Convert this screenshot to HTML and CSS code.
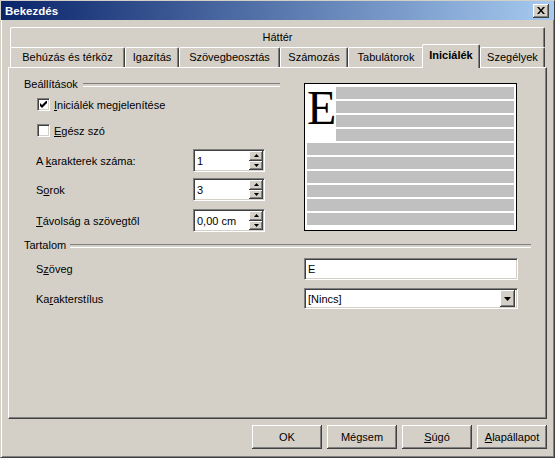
FILE: index.html
```html
<!DOCTYPE html>
<html lang="hu">
<head>
<meta charset="utf-8">
<title>Bekezdés</title>
<link rel="stylesheet" href="styles.css">
</head>
<body>
<div class="window">
  <div class="caption">
    <span class="caption-title">Bekezdés</span>
    <span class="close-btn"><svg width="8" height="7" viewBox="0 0 8 7"><path d="M0 0h2l2 2.4L6 0h2L5 3.5 8 7H6L4 4.6 2 7H0l3-3.5z" fill="#000"/></svg></span>
  </div>
  <div class="content">
    <div class="tabs">
      <div class="tab-row">
        <div class="tab tab-wide">Háttér</div>
      </div>
      <div class="tab-row tab-row-front">
        <div class="tab t1">Behúzás és térköz</div>
        <div class="tab t2">Igazítás</div>
        <div class="tab t3">Szövegbeosztás</div>
        <div class="tab t4">Számozás</div>
        <div class="tab t5">Tabulátorok</div>
        <div class="tab t6 selected">Iniciálék</div>
        <div class="tab t7">Szegélyek</div>
      </div>
    </div>
    <div class="panel">
      <div class="top">
        <div class="settings">
          <div class="group-title">Beállítások</div>
          <div class="check-row">
            <span class="checkbox"><svg width="7" height="7" viewBox="0 0 7 7"><path d="M0 2l2 2 5-5v3L2 7 0 5z" fill="#000"/></svg></span>
            <span class="check-label"><u>I</u>niciálék megjelenítése</span>
          </div>
          <div class="check-row second">
            <span class="checkbox"></span>
            <span class="check-label"><u>E</u>gész szó</span>
          </div>
          <div class="spin-row r1">
            <span class="row-label">A <u>k</u>arakterek száma:</span>
            <div class="spin">
              <span class="spin-value">1</span>
              <span class="spin-btns">
                <span class="spin-btn"><svg width="5" height="3" viewBox="0 0 5 3"><path d="M0 3h5L2.5 0z" fill="#000"/></svg></span>
                <span class="spin-btn"><svg width="5" height="3" viewBox="0 0 5 3"><path d="M0 0h5L2.5 3z" fill="#000"/></svg></span>
              </span>
            </div>
          </div>
          <div class="spin-row r2">
            <span class="row-label">S<u>o</u>rok</span>
            <div class="spin">
              <span class="spin-value">3</span>
              <span class="spin-btns">
                <span class="spin-btn"><svg width="5" height="3" viewBox="0 0 5 3"><path d="M0 3h5L2.5 0z" fill="#000"/></svg></span>
                <span class="spin-btn"><svg width="5" height="3" viewBox="0 0 5 3"><path d="M0 0h5L2.5 3z" fill="#000"/></svg></span>
              </span>
            </div>
          </div>
          <div class="spin-row r3">
            <span class="row-label"><u>T</u>ávolság a szövegtől</span>
            <div class="spin">
              <span class="spin-value">0,00 cm</span>
              <span class="spin-btns">
                <span class="spin-btn"><svg width="5" height="3" viewBox="0 0 5 3"><path d="M0 3h5L2.5 0z" fill="#000"/></svg></span>
                <span class="spin-btn"><svg width="5" height="3" viewBox="0 0 5 3"><path d="M0 0h5L2.5 3z" fill="#000"/></svg></span>
              </span>
            </div>
          </div>
        </div>
        <div class="preview">
          <div class="drop-cap">E</div>
          <div class="bar short b1"></div>
          <div class="bar short b2"></div>
          <div class="bar short b3"></div>
          <div class="bar short b4"></div>
          <div class="bar full"></div>
          <div class="bar full"></div>
          <div class="bar full"></div>
          <div class="bar full"></div>
          <div class="bar full"></div>
          <div class="bar full"></div>
        </div>
      </div>
      <div class="group-title wide">Tartalom</div>
      <div class="field-row f1">
        <span class="row-label">S<u>z</u>öveg</span>
        <div class="text-field">E</div>
      </div>
      <div class="field-row f2">
        <span class="row-label">Ka<u>r</u>akterstílus</span>
        <div class="select-field">
          <span class="select-value">[Nincs]</span>
          <span class="drop-btn"><svg width="7" height="4" viewBox="0 0 7 4"><path d="M0 0h7L3.5 4z" fill="#000"/></svg></span>
        </div>
      </div>
    </div>
    <div class="buttons">
      <div class="btn">OK</div>
      <div class="btn">Mégsem</div>
      <div class="btn"><span><u>S</u>úgó</span></div>
      <div class="btn"><span><u>A</u>lapállapot</span></div>
    </div>
  </div>
</div>
</body>
</html>
```
FILE: styles.css
```css
* { box-sizing: border-box; }
html, body { margin: 0; padding: 0; }
body {
  background: #D4D0C8;
  font-family: "Liberation Sans", Arial, sans-serif;
  font-size: 11px;
  color: #000;
}
u { text-decoration: underline; text-underline-offset: 1px; }

.window {
  width: 555px;
  height: 458px;
  background: #D4D0C8;
  border: 1px solid;
  border-color: #D4D0C8 #404040 #404040 #D4D0C8;
  box-shadow: inset 1px 1px #fff, inset -1px -1px #808080;
  display: flex;
  flex-direction: column;
}

.caption {
  height: 19px;
  flex: none;
  background: linear-gradient(to right, #0A246A, #A6CAF0);
  display: flex;
  align-items: center;
  justify-content: space-between;
  padding: 0 5px 0 4px;
}
.caption-title {
  color: #fff;
  font-weight: bold;
  font-size: 11.5px;
}
.close-btn {
  width: 16px;
  height: 14px;
  background: #D4D0C8;
  box-shadow: inset -1px -1px #404040, inset 1px 1px #fff, inset -2px -2px #808080;
  display: flex;
  align-items: center;
  justify-content: center;
  padding-bottom: 1px;
}

.content {
  padding: 7px 0 0 7px;
}

.tabs {
  margin-left: 2px;
}
.tab-row {
  display: flex;
  align-items: flex-end;
  height: 20px;
}
.tab {
  height: 20px;
  display: flex;
  align-items: center;
  justify-content: center;
  background: #D4D0C8;
  border-top: 1px solid #fff;
  border-left: 1px solid #fff;
  border-right: 1px solid #404040;
  box-shadow: inset -1px 0 #808080;
  border-top-left-radius: 2px;
  border-top-right-radius: 2px;
  padding-bottom: 1px;
  white-space: nowrap;
}
.tab-wide { width: 535px; }
.t1 { width: 115px; }
.t2 { width: 54px; }
.t3 { width: 101px; }
.t4 { width: 68px; }
.t5 { width: 76px; }
.t6 { width: 58px; }
.t7 { width: 65px; }
.tab.selected {
  height: 24px;
  margin-left: -2px;
  margin-bottom: -1px;
  font-weight: bold;
  position: relative;
  z-index: 1;
  padding-bottom: 4px;
}

.panel {
  width: 539px;
  height: 352px;
  border: 1px solid;
  border-color: #fff #404040 #404040 #fff;
  box-shadow: inset -1px -1px #808080;
  padding: 10px 15px 0 15px;
}

.top {
  display: flex;
  gap: 24px;
}
.settings {
  width: 256px;
}
.group-title {
  display: flex;
  align-items: center;
  height: 13px;
  line-height: 13px;
}
.group-title::after {
  content: "";
  flex: 1;
  height: 2px;
  border-top: 1px solid #808080;
  border-bottom: 1px solid #fff;
  margin-left: 5px;
  margin-top: 1px;
}
.group-title.wide {
  margin-top: 7px;
}
.group-title.wide::after {
  margin-left: 4px;
  margin-top: 0;
}

.check-row {
  display: flex;
  align-items: center;
  height: 13px;
  margin-left: 13px;
  margin-top: 7px;
}
.check-row.second { margin-top: 13px; }
.checkbox {
  width: 13px;
  height: 13px;
  background: #fff;
  border: 1px solid;
  border-color: #808080 #fff #fff #808080;
  box-shadow: inset 1px 1px #404040, inset -1px -1px #D4D0C8;
  display: flex;
  padding: 2px 0 0 2px;
  flex: none;
}
.check-label {
  margin-left: 4px;
}

.spin-row {
  display: grid;
  grid-template-columns: 169px 72px;
  align-items: center;
  height: 23px;
}
.spin-row.r1 { margin-top: 12px; }
.spin-row.r2 { margin-top: 6px; }
.spin-row.r3 { margin-top: 8px; }
.row-label {
  padding-left: 12px;
}
.spin, .text-field, .select-field {
  background: #fff;
  border: 1px solid;
  border-color: #808080 #fff #fff #808080;
  box-shadow: inset 1px 1px #404040, inset -1px -1px #D4D0C8;
  display: flex;
  align-items: center;
}
.spin {
  height: 23px;
  padding: 1px;
}
.spin-value {
  flex: 1;
  padding-left: 2px;
}
.spin-btns {
  display: flex;
  flex-direction: column;
  width: 14px;
  height: 19px;
  align-self: center;
  margin-right: 0;
}
.spin-btn {
  flex: 1;
  background: #D4D0C8;
  box-shadow: inset -1px -1px #404040, inset 1px 1px #fff, inset -2px -2px #808080;
  display: flex;
  align-items: center;
  justify-content: center;
}

.preview {
  width: 213px;
  height: 148px;
  margin-top: 5px;
  border: 1px solid #000;
  background: #fff;
  padding: 3px 2px 0 2px;
  display: grid;
  grid-template-columns: 29px 178px;
  grid-auto-rows: 12px;
  row-gap: 2px;
  align-content: start;
}
.drop-cap {
  grid-column: 1;
  grid-row: 1 / span 4;
  font-family: "Liberation Serif", "Times New Roman", serif;
  font-size: 48px;
  line-height: 48px;
  margin-top: -3px;
}
.bar { background: #C0C0C0; }
.bar.short { grid-column: 2; }
.b1 { grid-row: 1; }
.b2 { grid-row: 2; }
.b3 { grid-row: 3; }
.b4 { grid-row: 4; }
.bar.full { grid-column: 1 / span 2; }

.field-row {
  display: grid;
  grid-template-columns: 280px 214px;
  align-items: center;
}
.field-row.f1 { margin-top: 6px; }
.field-row.f2 { margin-top: 8px; }
.text-field {
  height: 22px;
  padding-left: 3px;
}
.select-field {
  height: 21px;
  padding: 2px 2px 2px 2px;
}
.select-value {
  flex: 1;
  padding-left: 1px;
}
.drop-btn {
  width: 15px;
  height: 17px;
  background: #D4D0C8;
  box-shadow: inset -1px -1px #404040, inset 1px 1px #fff, inset -2px -2px #808080;
  display: flex;
  align-items: center;
  justify-content: center;
}

.buttons {
  width: 539px;
  display: flex;
  justify-content: flex-end;
  gap: 5px;
  margin-top: 6px;
}
.btn {
  width: 70px;
  height: 24px;
  display: flex;
  align-items: center;
  justify-content: center;
  background: #D4D0C8;
  box-shadow: inset -1px -1px #404040, inset 1px 1px #fff, inset -2px -2px #808080;
}
```
